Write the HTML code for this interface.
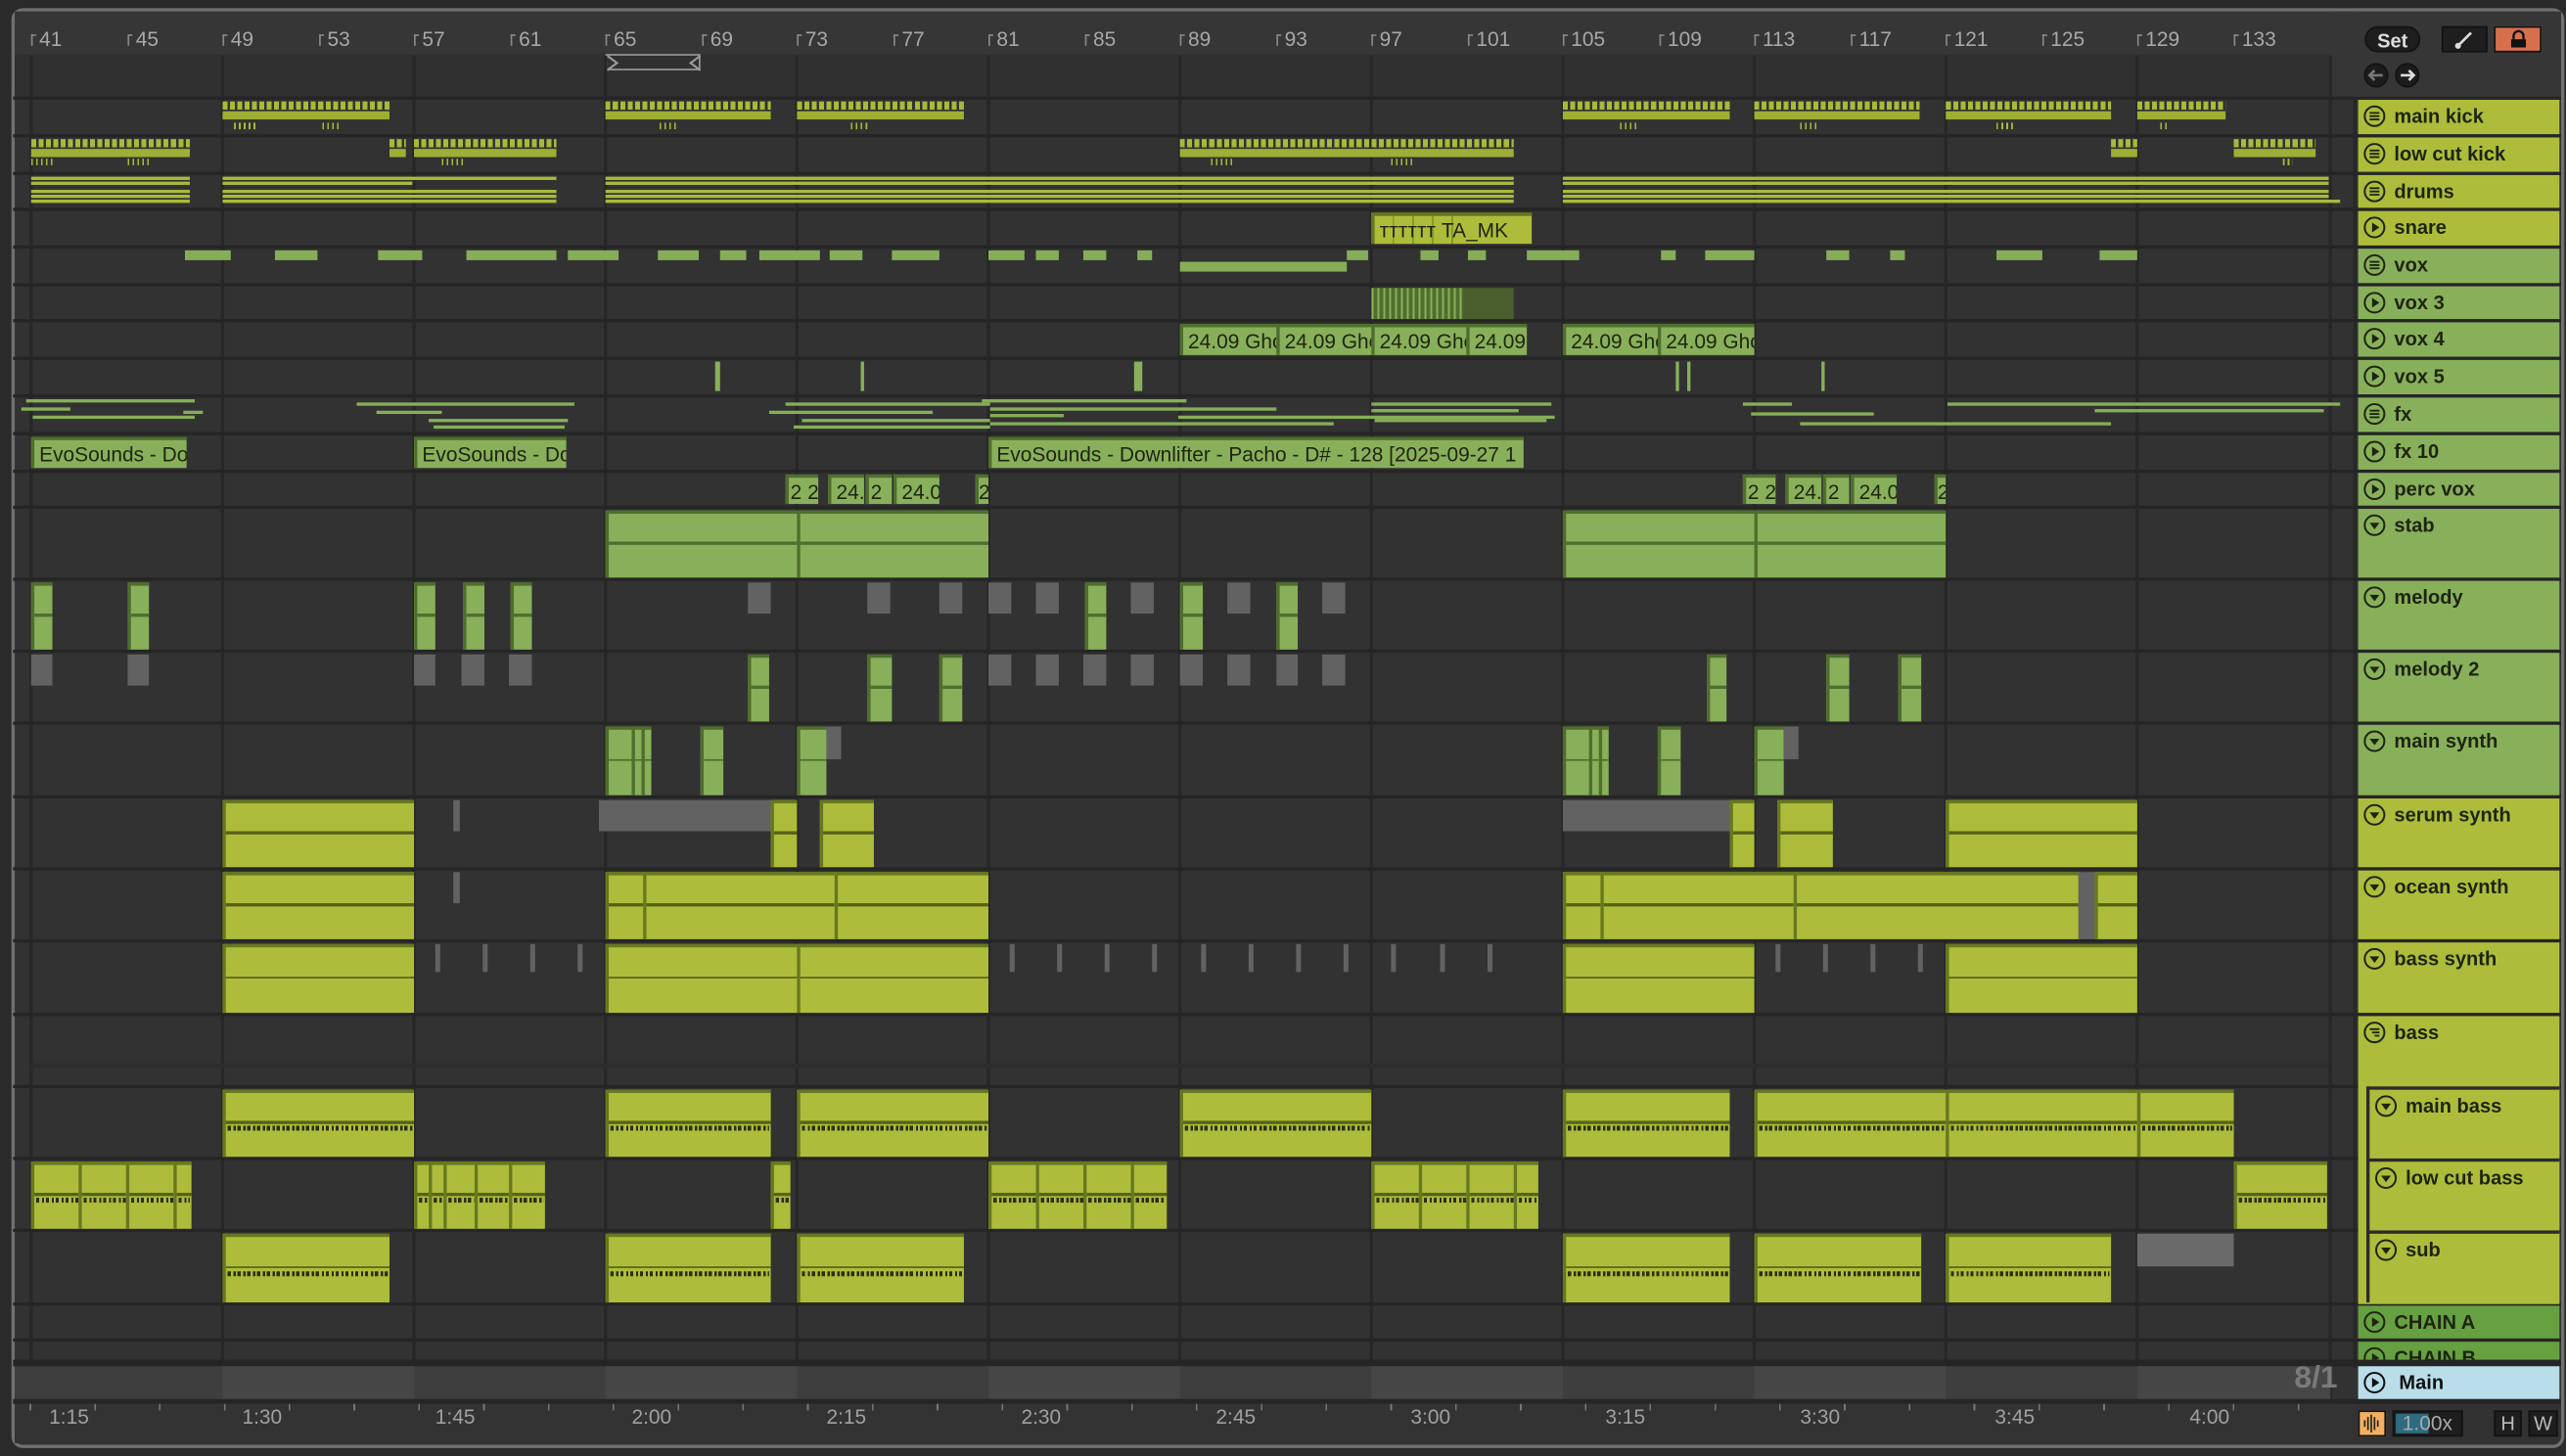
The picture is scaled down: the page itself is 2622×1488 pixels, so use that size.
<!DOCTYPE html>
<html><head><meta charset="utf-8">
<style>
html,body{margin:0;padding:0;background:#2a2a2a;width:2622px;height:1488px;overflow:hidden}
#s{position:absolute;left:0;top:0;width:1568px;height:890px;transform:scale(1.67219);transform-origin:0 0;font-family:"Liberation Sans",sans-serif}
.a{position:absolute}
.g,.y,.k{position:absolute;box-sizing:border-box}
.g{background:#88b05a;border-top:2px solid #4f6e2e;border-left:2px solid #4f6e2e}
.y{background:#adbd3b;border-top:2px solid #68781f;border-left:2px solid #68781f}
.k{background:#626262}
.L::before{content:"";position:absolute;left:0;right:0;top:44%;height:1.5px;background:rgba(50,60,10,.7)}
.g.L::before{background:#4f6e2e}
.B::after{content:"";position:absolute;left:1px;right:1px;top:52%;height:3px;background:repeating-linear-gradient(90deg,#2a2f10 0 2px,transparent 2px 3.6px,#2a2f10 3.6px 5px,transparent 5px 6px)}
.t{font-size:12.5px;color:#1f2410;line-height:18px;padding-left:3px;white-space:nowrap;overflow:hidden}
.sep{position:absolute;left:8px;width:1557px;height:2px;background:#252525}
.vl{position:absolute;top:34px;width:2px;height:822px;background:#272727}
.rn{position:absolute;top:17px;font-size:12.5px;color:#a8a8a8}
.rt{position:absolute;top:21px;width:1px;height:7px;border-left:1px solid #888;border-top:1px solid #888;box-sizing:border-box;width:3px}
.h{position:absolute;left:1441px;width:123px;box-sizing:border-box;font-size:12px;font-weight:bold;color:#1e2410;padding-left:22px;line-height:20px;white-space:nowrap;overflow:hidden}
.h svg{position:absolute;left:3px;top:3px}
.hy{background:#adbd3b}.hg{background:#88b05a}
.ks{position:absolute;height:5px;background:repeating-linear-gradient(90deg,#a9b93a 0 3px,transparent 3px 4.5px)}
.kb{position:absolute;height:5px;background:#9fae35}
.kt{position:absolute;height:4px;background:repeating-linear-gradient(90deg,#a9b93a 0 1px,transparent 1px 3px)}
.ln{position:absolute;height:1.5px;background:#a9b93a}
.fl{position:absolute;height:1.5px;background:#86ae58}
.vb{position:absolute;height:6px;background:#86ae58}
.gb{position:absolute;height:2px;background:#2b2b2b}
.bt{position:absolute;font-size:12.5px;color:#a0a0a0;top:859px}
</style></head><body><div id="s">
<!-- panel -->
<div class="a" style="left:7px;top:5px;width:1560px;height:880px;border:2px solid #707070;border-radius:7px;background:#323232;box-sizing:border-box"></div>
<div class="a" style="left:9px;top:7px;width:1430px;height:26px;background:#363636"></div>
<div class="a" style="left:9px;top:33px;width:1415px;height:27px;background:#303030"></div>
<div class="a" style="left:1424px;top:7px;width:141px;height:53px;background:#363636"></div>
<!-- ruler numbers -->
<div class="rt" style="left:19px"></div><div class="rn" style="left:24px">41</div>
<div class="rt" style="left:78px"></div><div class="rn" style="left:83px">45</div>
<div class="rt" style="left:136px"></div><div class="rn" style="left:141px">49</div>
<div class="rt" style="left:195px"></div><div class="rn" style="left:200px">53</div>
<div class="rt" style="left:253px"></div><div class="rn" style="left:258px">57</div>
<div class="rt" style="left:312px"></div><div class="rn" style="left:317px">61</div>
<div class="rt" style="left:370px"></div><div class="rn" style="left:375px">65</div>
<div class="rt" style="left:429px"></div><div class="rn" style="left:434px">69</div>
<div class="rt" style="left:487px"></div><div class="rn" style="left:492px">73</div>
<div class="rt" style="left:546px"></div><div class="rn" style="left:551px">77</div>
<div class="rt" style="left:604px"></div><div class="rn" style="left:609px">81</div>
<div class="rt" style="left:663px"></div><div class="rn" style="left:668px">85</div>
<div class="rt" style="left:721px"></div><div class="rn" style="left:726px">89</div>
<div class="rt" style="left:780px"></div><div class="rn" style="left:785px">93</div>
<div class="rt" style="left:838px"></div><div class="rn" style="left:843px">97</div>
<div class="rt" style="left:897px"></div><div class="rn" style="left:902px">101</div>
<div class="rt" style="left:955px"></div><div class="rn" style="left:960px">105</div>
<div class="rt" style="left:1014px"></div><div class="rn" style="left:1019px">109</div>
<div class="rt" style="left:1072px"></div><div class="rn" style="left:1077px">113</div>
<div class="rt" style="left:1131px"></div><div class="rn" style="left:1136px">117</div>
<div class="rt" style="left:1189px"></div><div class="rn" style="left:1194px">121</div>
<div class="rt" style="left:1248px"></div><div class="rn" style="left:1253px">125</div>
<div class="rt" style="left:1306px"></div><div class="rn" style="left:1311px">129</div>
<div class="rt" style="left:1365px"></div><div class="rn" style="left:1370px">133</div>
<!-- loop brace -->
<div class="a" style="left:370px;top:33px;width:58px;height:10px;border:1.5px solid #999;box-sizing:border-box"></div>
<svg class="a" style="left:370px;top:33px" width="60" height="11"><path d="M1 1 L7 5.5 L1 10 M58 1 L52 5.5 L58 10" fill="none" stroke="#999" stroke-width="1.3"/></svg>
<!-- vertical grid -->
<div class="vl" style="left:18px"></div><div class="vl" style="left:135px"></div><div class="vl" style="left:252px"></div><div class="vl" style="left:369px"></div><div class="vl" style="left:486px"></div><div class="vl" style="left:603px"></div><div class="vl" style="left:720px"></div><div class="vl" style="left:837px"></div><div class="vl" style="left:954px"></div><div class="vl" style="left:1071px"></div><div class="vl" style="left:1188px"></div><div class="vl" style="left:1305px"></div><div class="vl" style="left:1423px"></div>
<div class="a" style="left:1438px;top:60px;width:2px;height:776px;background:#272727"></div>
<!-- separators -->
<div class="sep" style="top:59px"></div><div class="sep" style="top:82px"></div><div class="sep" style="top:105px"></div><div class="sep" style="top:127px"></div><div class="sep" style="top:150px"></div><div class="sep" style="top:173px"></div><div class="sep" style="top:195px"></div><div class="sep" style="top:218px"></div><div class="sep" style="top:241px"></div><div class="sep" style="top:264px"></div><div class="sep" style="top:287px"></div><div class="sep" style="top:309px"></div><div class="sep" style="top:353px"></div><div class="sep" style="top:397px"></div><div class="sep" style="top:441px"></div><div class="sep" style="top:486px"></div><div class="sep" style="top:530px"></div><div class="sep" style="top:574px"></div><div class="sep" style="top:619px"></div><div class="sep" style="top:663px"></div><div class="sep" style="top:707px"></div><div class="sep" style="top:751px"></div><div class="sep" style="top:796px"></div><div class="sep" style="top:818px"></div>
<div class="a" style="left:8px;top:831px;width:1557px;height:4px;background:#252525"></div>

<!-- main kick -->
<div class="ks" style="left:136px;top:62px;width:102px"></div><div class="kb" style="left:136px;top:68px;width:102px"></div><div class="kt" style="left:143px;top:75px;width:14px"></div><div class="kt" style="left:197px;top:75px;width:10px"></div>
<div class="ks" style="left:370px;top:62px;width:101px"></div><div class="kb" style="left:370px;top:68px;width:101px"></div><div class="kt" style="left:403px;top:75px;width:10px"></div>
<div class="ks" style="left:487px;top:62px;width:102px"></div><div class="kb" style="left:487px;top:68px;width:102px"></div><div class="kt" style="left:520px;top:75px;width:10px"></div>
<div class="ks" style="left:955px;top:62px;width:102px"></div><div class="kb" style="left:955px;top:68px;width:102px"></div><div class="kt" style="left:990px;top:75px;width:10px"></div>
<div class="ks" style="left:1072px;top:62px;width:101px"></div><div class="kb" style="left:1072px;top:68px;width:101px"></div><div class="kt" style="left:1100px;top:75px;width:10px"></div>
<div class="ks" style="left:1189px;top:62px;width:101px"></div><div class="kb" style="left:1189px;top:68px;width:101px"></div><div class="kt" style="left:1220px;top:75px;width:10px"></div>
<div class="ks" style="left:1306px;top:62px;width:54px"></div><div class="kb" style="left:1306px;top:68px;width:54px"></div><div class="kt" style="left:1320px;top:75px;width:6px"></div>
<!-- low cut kick -->
<div class="ks" style="left:19px;top:85px;width:97px"></div><div class="kb" style="left:19px;top:91px;width:97px"></div><div class="kt" style="left:19px;top:97px;width:14px"></div><div class="kt" style="left:78px;top:97px;width:14px"></div>
<div class="ks" style="left:238px;top:85px;width:10px"></div><div class="kb" style="left:238px;top:91px;width:10px"></div>
<div class="ks" style="left:253px;top:85px;width:87px"></div><div class="kb" style="left:253px;top:91px;width:87px"></div><div class="kt" style="left:270px;top:97px;width:14px"></div>
<div class="ks" style="left:721px;top:85px;width:204px"></div><div class="kb" style="left:721px;top:91px;width:204px"></div><div class="kt" style="left:740px;top:97px;width:14px"></div><div class="kt" style="left:850px;top:97px;width:14px"></div>
<div class="ks" style="left:1290px;top:85px;width:16px"></div><div class="kb" style="left:1290px;top:91px;width:16px"></div>
<div class="ks" style="left:1365px;top:85px;width:50px"></div><div class="kb" style="left:1365px;top:91px;width:50px"></div><div class="kt" style="left:1395px;top:97px;width:6px"></div>
<!-- drums -->
<div class="ln" style="left:19px;top:108px;width:97px"></div><div class="ln" style="left:19px;top:111px;width:97px"></div><div class="ln" style="left:19px;top:116px;width:97px"></div><div class="ln" style="left:19px;top:119px;width:97px"></div><div class="ln" style="left:19px;top:122px;width:97px"></div>
<div class="ln" style="left:136px;top:108px;width:204px"></div><div class="ln" style="left:136px;top:111px;width:116px"></div><div class="ln" style="left:136px;top:116px;width:204px"></div><div class="ln" style="left:136px;top:119px;width:204px"></div><div class="ln" style="left:136px;top:122px;width:204px"></div>
<div class="ln" style="left:370px;top:108px;width:555px"></div><div class="ln" style="left:370px;top:111px;width:555px"></div><div class="ln" style="left:370px;top:116px;width:555px"></div><div class="ln" style="left:370px;top:119px;width:555px"></div><div class="ln" style="left:370px;top:122px;width:555px"></div>
<div class="ln" style="left:955px;top:108px;width:468px"></div><div class="ln" style="left:955px;top:111px;width:468px"></div><div class="ln" style="left:955px;top:116px;width:468px"></div><div class="ln" style="left:955px;top:119px;width:468px"></div><div class="ln" style="left:955px;top:122px;width:475px"></div>
<!-- snare -->
<div class="y t" style="left:838px;top:130px;width:98px;height:19px;background:repeating-linear-gradient(90deg,#adbd3b 0 11px,#889a28 11px 12px) 0 0/54px 100% no-repeat,#adbd3b">ᴛᴛᴛᴛᴛᴛ&nbsp;TA_MK</div>
<!-- vox -->
<div class="vb" style="left:113px;top:153px;width:28px"></div><div class="vb" style="left:168px;top:153px;width:26px"></div><div class="vb" style="left:231px;top:153px;width:27px"></div><div class="vb" style="left:285px;top:153px;width:55px"></div><div class="vb" style="left:347px;top:153px;width:31px"></div><div class="vb" style="left:402px;top:153px;width:25px"></div><div class="vb" style="left:440px;top:153px;width:16px"></div><div class="vb" style="left:464px;top:153px;width:37px"></div><div class="vb" style="left:507px;top:153px;width:20px"></div><div class="vb" style="left:545px;top:153px;width:29px"></div><div class="vb" style="left:604px;top:153px;width:22px"></div><div class="vb" style="left:633px;top:153px;width:14px"></div><div class="vb" style="left:662px;top:153px;width:14px"></div><div class="vb" style="left:695px;top:153px;width:9px"></div><div class="vb" style="left:823px;top:153px;width:13px"></div><div class="vb" style="left:868px;top:153px;width:11px"></div><div class="vb" style="left:897px;top:153px;width:11px"></div><div class="vb" style="left:933px;top:153px;width:32px"></div><div class="vb" style="left:1015px;top:153px;width:9px"></div><div class="vb" style="left:1042px;top:153px;width:30px"></div><div class="vb" style="left:1116px;top:153px;width:14px"></div><div class="vb" style="left:1155px;top:153px;width:9px"></div><div class="vb" style="left:1220px;top:153px;width:28px"></div><div class="vb" style="left:1283px;top:153px;width:23px"></div>
<div class="vb" style="left:721px;top:160px;width:102px"></div>
<!-- vox 3 -->
<div class="a" style="left:838px;top:176px;width:87px;height:19px;background:#4a5e2e"></div>
<div class="a" style="left:838px;top:176px;width:56px;height:19px;background:repeating-linear-gradient(90deg,#88b05a 0 1.2px,#4f6e2e 1.2px 3.6px)"></div>
<!-- vox 4 -->
<div class="g t" style="left:721px;top:198px;width:59px;height:19px">24.09 Ghost</div>
<div class="g t" style="left:780px;top:198px;width:59px;height:19px">24.09 Ghost</div>
<div class="g t" style="left:838px;top:198px;width:59px;height:19px">24.09 Ghost</div>
<div class="g t" style="left:896px;top:198px;width:37px;height:19px">24.09</div>
<div class="g t" style="left:955px;top:198px;width:59px;height:19px">24.09 Ghost</div>
<div class="g t" style="left:1013px;top:198px;width:59px;height:19px">24.09 Ghost</div>
<!-- vox 5 -->
<div class="a" style="left:437px;top:221px;width:3px;height:18px;background:#88b05a"></div><div class="a" style="left:526px;top:221px;width:2px;height:18px;background:#88b05a"></div><div class="a" style="left:693px;top:221px;width:5px;height:18px;background:#88b05a"></div><div class="a" style="left:1024px;top:221px;width:2px;height:18px;background:#88b05a"></div><div class="a" style="left:1031px;top:221px;width:2px;height:18px;background:#88b05a"></div><div class="a" style="left:1113px;top:221px;width:2px;height:18px;background:#88b05a"></div>
<!-- fx -->
<div class="fl" style="left:16px;top:244px;width:103px"></div><div class="fl" style="left:13px;top:249px;width:30px"></div><div class="fl" style="left:20px;top:254px;width:99px"></div><div class="fl" style="left:112px;top:251px;width:12px"></div>
<div class="fl" style="left:218px;top:246px;width:133px"></div><div class="fl" style="left:230px;top:251px;width:40px"></div><div class="fl" style="left:262px;top:256px;width:85px"></div><div class="fl" style="left:265px;top:260px;width:80px"></div>
<div class="fl" style="left:480px;top:246px;width:125px"></div><div class="fl" style="left:470px;top:251px;width:100px"></div><div class="fl" style="left:490px;top:256px;width:115px"></div><div class="fl" style="left:485px;top:260px;width:120px"></div>
<div class="fl" style="left:600px;top:244px;width:125px"></div><div class="fl" style="left:605px;top:249px;width:175px"></div><div class="fl" style="left:605px;top:253px;width:45px"></div><div class="fl" style="left:605px;top:258px;width:210px"></div><div class="fl" style="left:720px;top:254px;width:230px"></div>
<div class="fl" style="left:838px;top:246px;width:110px"></div><div class="fl" style="left:838px;top:250px;width:90px"></div><div class="fl" style="left:840px;top:256px;width:105px"></div>
<div class="fl" style="left:1065px;top:246px;width:30px"></div><div class="fl" style="left:1070px;top:252px;width:75px"></div><div class="fl" style="left:1100px;top:258px;width:190px"></div><div class="fl" style="left:1190px;top:246px;width:240px"></div><div class="fl" style="left:1280px;top:250px;width:140px"></div>
<!-- fx 10 -->
<div class="g t" style="left:19px;top:267px;width:95px;height:19px">EvoSounds - Downlifter</div>
<div class="g t" style="left:253px;top:267px;width:93px;height:19px">EvoSounds - Downlifter</div>
<div class="g t" style="left:604px;top:267px;width:327px;height:19px">EvoSounds - Downlifter - Pacho - D# - 128 [2025-09-27 1</div>
<!-- perc vox -->
<div class="g t" style="left:480px;top:290px;width:20px;height:18px;padding-left:1px">2 2</div><div class="g t" style="left:506px;top:290px;width:22px;height:18px">24.</div><div class="g t" style="left:529px;top:290px;width:16px;height:18px;padding-left:1px">2</div><div class="g t" style="left:546px;top:290px;width:28px;height:18px">24.0</div><div class="g t" style="left:596px;top:290px;width:8px;height:18px;padding-left:0">2</div>
<div class="g t" style="left:1065px;top:290px;width:20px;height:18px;padding-left:1px">2 2</div><div class="g t" style="left:1091px;top:290px;width:22px;height:18px">24.</div><div class="g t" style="left:1114px;top:290px;width:16px;height:18px;padding-left:1px">2</div><div class="g t" style="left:1131px;top:290px;width:28px;height:18px">24.0</div><div class="g t" style="left:1182px;top:290px;width:7px;height:18px;padding-left:0">2</div>
<!-- stab -->
<div class="g L" style="left:370px;top:312px;width:118px;height:41px"></div><div class="g L" style="left:487px;top:312px;width:117px;height:41px"></div>
<div class="g L" style="left:955px;top:312px;width:118px;height:41px"></div><div class="g L" style="left:1072px;top:312px;width:117px;height:41px"></div>
<!-- melody -->
<div class="g L" style="left:19px;top:356px;width:13px;height:41px"></div><div class="g L" style="left:78px;top:356px;width:13px;height:41px"></div><div class="g L" style="left:253px;top:356px;width:13px;height:41px"></div><div class="g L" style="left:283px;top:356px;width:13px;height:41px"></div><div class="g L" style="left:312px;top:356px;width:13px;height:41px"></div><div class="g L" style="left:663px;top:356px;width:13px;height:41px"></div><div class="g L" style="left:721px;top:356px;width:14px;height:41px"></div><div class="g L" style="left:780px;top:356px;width:13px;height:41px"></div>
<div class="k" style="left:457px;top:356px;width:14px;height:19px"></div><div class="k" style="left:530px;top:356px;width:14px;height:19px"></div><div class="k" style="left:574px;top:356px;width:14px;height:19px"></div><div class="k" style="left:604px;top:356px;width:14px;height:19px"></div><div class="k" style="left:633px;top:356px;width:14px;height:19px"></div><div class="k" style="left:691px;top:356px;width:14px;height:19px"></div><div class="k" style="left:750px;top:356px;width:14px;height:19px"></div><div class="k" style="left:808px;top:356px;width:14px;height:19px"></div>
<!-- melody 2 -->
<div class="k" style="left:19px;top:400px;width:13px;height:19px"></div><div class="k" style="left:78px;top:400px;width:13px;height:19px"></div><div class="k" style="left:253px;top:400px;width:13px;height:19px"></div><div class="k" style="left:282px;top:400px;width:14px;height:19px"></div><div class="k" style="left:311px;top:400px;width:14px;height:19px"></div><div class="k" style="left:604px;top:400px;width:14px;height:19px"></div><div class="k" style="left:633px;top:400px;width:14px;height:19px"></div><div class="k" style="left:662px;top:400px;width:14px;height:19px"></div><div class="k" style="left:691px;top:400px;width:14px;height:19px"></div><div class="k" style="left:721px;top:400px;width:14px;height:19px"></div><div class="k" style="left:750px;top:400px;width:14px;height:19px"></div><div class="k" style="left:780px;top:400px;width:13px;height:19px"></div><div class="k" style="left:808px;top:400px;width:14px;height:19px"></div>
<div class="g L" style="left:457px;top:400px;width:13px;height:41px"></div><div class="g L" style="left:530px;top:400px;width:15px;height:41px"></div><div class="g L" style="left:574px;top:400px;width:14px;height:41px"></div><div class="g L" style="left:1043px;top:400px;width:12px;height:41px"></div><div class="g L" style="left:1116px;top:400px;width:14px;height:41px"></div><div class="g L" style="left:1160px;top:400px;width:14px;height:41px"></div>
<!-- main synth -->
<div class="g L" style="left:370px;top:444px;width:17px;height:42px"></div><div class="g L" style="left:386px;top:444px;width:7px;height:42px"></div><div class="g L" style="left:392px;top:444px;width:6px;height:42px"></div><div class="g L" style="left:428px;top:444px;width:14px;height:42px"></div><div class="g L" style="left:487px;top:444px;width:18px;height:42px"></div><div class="k" style="left:505px;top:444px;width:9px;height:20px"></div>
<div class="g L" style="left:955px;top:444px;width:17px;height:42px"></div><div class="g L" style="left:971px;top:444px;width:7px;height:42px"></div><div class="g L" style="left:977px;top:444px;width:6px;height:42px"></div><div class="g L" style="left:1013px;top:444px;width:14px;height:42px"></div><div class="g L" style="left:1072px;top:444px;width:18px;height:42px"></div><div class="k" style="left:1090px;top:444px;width:9px;height:20px"></div>
<!-- serum -->
<div class="y L" style="left:136px;top:489px;width:117px;height:41px"></div>
<div class="k" style="left:277px;top:489px;width:4px;height:19px"></div>
<div class="k" style="left:366px;top:489px;width:105px;height:19px"></div>
<div class="y L" style="left:471px;top:489px;width:16px;height:41px"></div>
<div class="y L" style="left:501px;top:489px;width:33px;height:41px"></div>
<div class="k" style="left:955px;top:489px;width:102px;height:19px"></div>
<div class="y L" style="left:1057px;top:489px;width:15px;height:41px"></div>
<div class="y L" style="left:1086px;top:489px;width:34px;height:41px"></div>
<div class="y L" style="left:1189px;top:489px;width:117px;height:41px"></div>
<!-- ocean -->
<div class="y L" style="left:136px;top:533px;width:117px;height:41px"></div>
<div class="k" style="left:277px;top:533px;width:4px;height:19px"></div>
<div class="y L" style="left:370px;top:533px;width:25px;height:41px"></div><div class="y L" style="left:393px;top:533px;width:118px;height:41px"></div><div class="y L" style="left:510px;top:533px;width:94px;height:41px"></div>
<div class="y L" style="left:955px;top:533px;width:25px;height:41px"></div><div class="y L" style="left:978px;top:533px;width:120px;height:41px"></div><div class="y L" style="left:1096px;top:533px;width:175px;height:41px"></div><div class="k" style="left:1270px;top:533px;width:10px;height:41px"></div><div class="y L" style="left:1280px;top:533px;width:26px;height:41px"></div>
<!-- bass synth -->
<div class="y L" style="left:136px;top:577px;width:117px;height:42px"></div>
<div class="y L" style="left:370px;top:577px;width:118px;height:42px"></div><div class="y L" style="left:487px;top:577px;width:117px;height:42px"></div>
<div class="y L" style="left:955px;top:577px;width:117px;height:42px"></div>
<div class="y L" style="left:1189px;top:577px;width:117px;height:42px"></div>
<div class="k" style="left:266px;top:577px;width:3px;height:17px"></div><div class="k" style="left:295px;top:577px;width:3px;height:17px"></div><div class="k" style="left:324px;top:577px;width:3px;height:17px"></div><div class="k" style="left:353px;top:577px;width:3px;height:17px"></div>
<div class="k" style="left:617px;top:577px;width:3px;height:17px"></div><div class="k" style="left:646px;top:577px;width:3px;height:17px"></div><div class="k" style="left:675px;top:577px;width:3px;height:17px"></div><div class="k" style="left:704px;top:577px;width:3px;height:17px"></div><div class="k" style="left:734px;top:577px;width:3px;height:17px"></div><div class="k" style="left:763px;top:577px;width:3px;height:17px"></div><div class="k" style="left:792px;top:577px;width:3px;height:17px"></div><div class="k" style="left:821px;top:577px;width:3px;height:17px"></div><div class="k" style="left:850px;top:577px;width:3px;height:17px"></div><div class="k" style="left:880px;top:577px;width:3px;height:17px"></div><div class="k" style="left:909px;top:577px;width:3px;height:17px"></div>
<div class="k" style="left:1085px;top:577px;width:3px;height:17px"></div><div class="k" style="left:1114px;top:577px;width:3px;height:17px"></div><div class="k" style="left:1143px;top:577px;width:3px;height:17px"></div><div class="k" style="left:1172px;top:577px;width:3px;height:17px"></div>
<!-- bass -->
<div class="gb" style="left:19px;top:650px;width:1404px;height:3px;background:#2c2c2c"></div>
<!-- main bass -->
<div class="y L B" style="left:136px;top:666px;width:117px;height:41px"></div>
<div class="y L B" style="left:370px;top:666px;width:101px;height:41px"></div><div class="y L B" style="left:487px;top:666px;width:117px;height:41px"></div>
<div class="y L B" style="left:721px;top:666px;width:117px;height:41px"></div>
<div class="y L B" style="left:955px;top:666px;width:102px;height:41px"></div>
<div class="y L B" style="left:1072px;top:666px;width:117px;height:41px"></div><div class="y L B" style="left:1189px;top:666px;width:117px;height:41px"></div><div class="y L B" style="left:1306px;top:666px;width:59px;height:41px"></div>
<!-- low cut bass -->
<div class="y L B" style="left:19px;top:710px;width:30px;height:41px"></div><div class="y L B" style="left:48px;top:710px;width:30px;height:41px"></div><div class="y L B" style="left:77px;top:710px;width:30px;height:41px"></div><div class="y L B" style="left:106px;top:710px;width:11px;height:41px"></div>
<div class="y L B" style="left:253px;top:710px;width:10px;height:41px"></div><div class="y L B" style="left:262px;top:710px;width:10px;height:41px"></div><div class="y L B" style="left:271px;top:710px;width:20px;height:41px"></div><div class="y L B" style="left:290px;top:710px;width:22px;height:41px"></div><div class="y L B" style="left:311px;top:710px;width:22px;height:41px"></div>
<div class="y L B" style="left:471px;top:710px;width:12px;height:41px"></div>
<div class="y L B" style="left:604px;top:710px;width:30px;height:41px"></div><div class="y L B" style="left:633px;top:710px;width:30px;height:41px"></div><div class="y L B" style="left:662px;top:710px;width:30px;height:41px"></div><div class="y L B" style="left:691px;top:710px;width:22px;height:41px"></div>
<div class="y L B" style="left:838px;top:710px;width:30px;height:41px"></div><div class="y L B" style="left:867px;top:710px;width:30px;height:41px"></div><div class="y L B" style="left:896px;top:710px;width:30px;height:41px"></div><div class="y L B" style="left:925px;top:710px;width:15px;height:41px"></div>
<div class="y L B" style="left:1365px;top:710px;width:57px;height:41px"></div>
<!-- sub -->
<div class="y L B" style="left:136px;top:754px;width:102px;height:42px"></div>
<div class="y L B" style="left:370px;top:754px;width:101px;height:42px"></div><div class="y L B" style="left:487px;top:754px;width:102px;height:42px"></div>
<div class="y L B" style="left:955px;top:754px;width:102px;height:42px"></div><div class="y L B" style="left:1072px;top:754px;width:102px;height:42px"></div><div class="y L B" style="left:1189px;top:754px;width:101px;height:42px"></div>
<div class="k" style="left:1306px;top:754px;width:59px;height:20px;background:#6a6a6a"></div>

<!-- main band -->
<div class="a" style="left:9px;top:835px;width:1415px;height:21px;background:#3e3e3e"></div>
<div class="a" style="left:136px;top:835px;width:117px;height:21px;background:#464646"></div><div class="a" style="left:370px;top:835px;width:117px;height:21px;background:#464646"></div><div class="a" style="left:604px;top:835px;width:117px;height:21px;background:#464646"></div><div class="a" style="left:838px;top:835px;width:117px;height:21px;background:#464646"></div><div class="a" style="left:1072px;top:835px;width:117px;height:21px;background:#464646"></div><div class="a" style="left:1306px;top:835px;width:118px;height:21px;background:#464646"></div>
<div class="a" style="left:1402px;top:832px;font-size:19px;font-weight:bold;color:#7a7a7a">8/1</div>
<div class="a" style="left:8px;top:855px;width:1557px;height:3px;background:#252525"></div>
<!-- bottom ruler -->
<div class="a" style="left:9px;top:858px;width:1430px;height:24px;background:#333"></div>
<div class="bt" style="left:30px">1:15</div><div class="bt" style="left:148px">1:30</div><div class="bt" style="left:266px">1:45</div><div class="bt" style="left:386px">2:00</div><div class="bt" style="left:505px">2:15</div><div class="bt" style="left:624px">2:30</div><div class="bt" style="left:743px">2:45</div><div class="bt" style="left:862px">3:00</div><div class="bt" style="left:981px">3:15</div><div class="bt" style="left:1100px">3:30</div><div class="bt" style="left:1219px">3:45</div><div class="bt" style="left:1338px">4:00</div>
<div class="a" style="left:18px;top:858px;width:1410px;height:4px;background:repeating-linear-gradient(90deg,#777 0 1px,transparent 1px 39.6px)"></div>

<!-- top right controls -->
<div class="a" style="left:1445px;top:16px;width:34px;height:16px;border-radius:8px;background:#1e1e1e;border:1px solid #111;color:#ddd;font-size:12px;font-weight:bold;text-align:center;line-height:16px;box-sizing:border-box">Set</div>
<div class="a" style="left:1492px;top:16px;width:28px;height:16px;background:#1e1e1e;border:1px solid #111;box-sizing:border-box"><svg width="26" height="14"><path d="M9 11 L17 3" stroke="#ddd" stroke-width="1.6"/><circle cx="9" cy="11" r="1.8" fill="#ddd"/></svg></div>
<div class="a" style="left:1524px;top:16px;width:29px;height:16px;background:#d5704d;border:1px solid #111;box-sizing:border-box"><svg width="27" height="14"><path d="M11 7 V5 a3 3 0 0 1 6 0 V7" fill="none" stroke="#111" stroke-width="1.4"/><rect x="9.5" y="7" width="9" height="5" fill="#111"/></svg></div>
<svg class="a" style="left:1444px;top:38px" width="40" height="16"><circle cx="8" cy="8" r="7" fill="#1c1c1c" stroke="#111"/><circle cx="27" cy="8" r="7" fill="#1c1c1c" stroke="#111"/><path d="M12 8 H4 M7 5 L4 8 L7 11" stroke="#777" stroke-width="1.6" fill="none"/><path d="M23 8 H31 M28 5 L31 8 L28 11" stroke="#ddd" stroke-width="1.6" fill="none"/></svg>

<!-- track headers -->
<div class="h hy" style="top:61px;height:21px">main kick<svg width="16" height="16"><circle cx="7" cy="7" r="6" fill="none" stroke="#1e2410" stroke-width="1.2"/><path d="M4 5H10M4 7H10M4 9H10" stroke="#1e2410" stroke-width="1.1"/></svg></div>
<div class="h hy" style="top:84px;height:21px">low cut kick<svg width="16" height="16"><circle cx="7" cy="7" r="6" fill="none" stroke="#1e2410" stroke-width="1.2"/><path d="M4 5H10M4 7H10M4 9H10" stroke="#1e2410" stroke-width="1.1"/></svg></div>
<div class="h hy" style="top:107px;height:20px">drums<svg width="16" height="16"><circle cx="7" cy="7" r="6" fill="none" stroke="#1e2410" stroke-width="1.2"/><path d="M4 5H10M4 7H10M4 9H10" stroke="#1e2410" stroke-width="1.1"/></svg></div>
<div class="h hy" style="top:129px;height:21px">snare<svg width="16" height="16"><circle cx="7" cy="7" r="6" fill="none" stroke="#1e2410" stroke-width="1.2"/><path d="M5.5 4L10 7L5.5 10Z" fill="#1e2410"/></svg></div>
<div class="h hg" style="top:152px;height:21px">vox<svg width="16" height="16"><circle cx="7" cy="7" r="6" fill="none" stroke="#1e2410" stroke-width="1.2"/><path d="M4 5H10M4 7H10M4 9H10" stroke="#1e2410" stroke-width="1.1"/></svg></div>
<div class="h hg" style="top:175px;height:20px">vox 3<svg width="16" height="16"><circle cx="7" cy="7" r="6" fill="none" stroke="#1e2410" stroke-width="1.2"/><path d="M5.5 4L10 7L5.5 10Z" fill="#1e2410"/></svg></div>
<div class="h hg" style="top:197px;height:21px">vox 4<svg width="16" height="16"><circle cx="7" cy="7" r="6" fill="none" stroke="#1e2410" stroke-width="1.2"/><path d="M5.5 4L10 7L5.5 10Z" fill="#1e2410"/></svg></div>
<div class="h hg" style="top:220px;height:21px">vox 5<svg width="16" height="16"><circle cx="7" cy="7" r="6" fill="none" stroke="#1e2410" stroke-width="1.2"/><path d="M5.5 4L10 7L5.5 10Z" fill="#1e2410"/></svg></div>
<div class="h hg" style="top:243px;height:21px">fx<svg width="16" height="16"><circle cx="7" cy="7" r="6" fill="none" stroke="#1e2410" stroke-width="1.2"/><path d="M4 5H10M4 7H10M4 9H10" stroke="#1e2410" stroke-width="1.1"/></svg></div>
<div class="h hg" style="top:266px;height:21px">fx 10<svg width="16" height="16"><circle cx="7" cy="7" r="6" fill="none" stroke="#1e2410" stroke-width="1.2"/><path d="M5.5 4L10 7L5.5 10Z" fill="#1e2410"/></svg></div>
<div class="h hg" style="top:289px;height:20px">perc vox<svg width="16" height="16"><circle cx="7" cy="7" r="6" fill="none" stroke="#1e2410" stroke-width="1.2"/><path d="M5.5 4L10 7L5.5 10Z" fill="#1e2410"/></svg></div>
<div class="h hg" style="top:311px;height:42px">stab<svg width="16" height="16"><circle cx="7" cy="7" r="6" fill="none" stroke="#1e2410" stroke-width="1.2"/><path d="M4 5.5H10L7 9.5Z" fill="#1e2410"/></svg></div>
<div class="h hg" style="top:355px;height:42px">melody<svg width="16" height="16"><circle cx="7" cy="7" r="6" fill="none" stroke="#1e2410" stroke-width="1.2"/><path d="M4 5.5H10L7 9.5Z" fill="#1e2410"/></svg></div>
<div class="h hg" style="top:399px;height:42px">melody 2<svg width="16" height="16"><circle cx="7" cy="7" r="6" fill="none" stroke="#1e2410" stroke-width="1.2"/><path d="M4 5.5H10L7 9.5Z" fill="#1e2410"/></svg></div>
<div class="h hg" style="top:443px;height:43px">main synth<svg width="16" height="16"><circle cx="7" cy="7" r="6" fill="none" stroke="#1e2410" stroke-width="1.2"/><path d="M4 5.5H10L7 9.5Z" fill="#1e2410"/></svg></div>
<div class="h hy" style="top:488px;height:42px">serum synth<svg width="16" height="16"><circle cx="7" cy="7" r="6" fill="none" stroke="#1e2410" stroke-width="1.2"/><path d="M4 5.5H10L7 9.5Z" fill="#1e2410"/></svg></div>
<div class="h hy" style="top:532px;height:42px">ocean synth<svg width="16" height="16"><circle cx="7" cy="7" r="6" fill="none" stroke="#1e2410" stroke-width="1.2"/><path d="M4 5.5H10L7 9.5Z" fill="#1e2410"/></svg></div>
<div class="h hy" style="top:576px;height:43px">bass synth<svg width="16" height="16"><circle cx="7" cy="7" r="6" fill="none" stroke="#1e2410" stroke-width="1.2"/><path d="M4 5.5H10L7 9.5Z" fill="#1e2410"/></svg></div>
<div class="h hy" style="top:621px;height:176px">bass<svg width="16" height="16"><circle cx="7" cy="7" r="6" fill="none" stroke="#1e2410" stroke-width="1.2"/><path d="M4 5H10M5.5 7H10M7 9H10" stroke="#1e2410" stroke-width="1.1"/></svg></div>
<div class="h hy" style="left:1446px;width:118px;top:664px;height:44px;border-left:2px solid #2a2a2a;border-top:2px solid #2a2a2a;padding-left:22px">main bass<svg width="16" height="16"><circle cx="7" cy="7" r="6" fill="none" stroke="#1e2410" stroke-width="1.2"/><path d="M4 5.5H10L7 9.5Z" fill="#1e2410"/></svg></div>
<div class="h hy" style="left:1446px;width:118px;top:708px;height:44px;border-left:2px solid #2a2a2a;border-top:2px solid #2a2a2a;padding-left:22px">low cut bass<svg width="16" height="16"><circle cx="7" cy="7" r="6" fill="none" stroke="#1e2410" stroke-width="1.2"/><path d="M4 5.5H10L7 9.5Z" fill="#1e2410"/></svg></div>
<div class="h hy" style="left:1446px;width:118px;top:752px;height:44px;border-left:2px solid #2a2a2a;border-top:2px solid #2a2a2a;padding-left:22px">sub<svg width="16" height="16"><circle cx="7" cy="7" r="6" fill="none" stroke="#1e2410" stroke-width="1.2"/><path d="M4 5.5H10L7 9.5Z" fill="#1e2410"/></svg></div>
<div class="h" style="top:798px;height:20px;background:#66a041">CHAIN A<svg width="16" height="16"><circle cx="7" cy="7" r="6" fill="none" stroke="#1e2410" stroke-width="1.2"/><path d="M5.5 4L10 7L5.5 10Z" fill="#1e2410"/></svg></div>
<div class="h" style="top:820px;height:11px;background:#66a041;line-height:20px">CHAIN B<svg width="16" height="16"><circle cx="7" cy="7" r="6" fill="none" stroke="#1e2410" stroke-width="1.2"/><path d="M5.5 4L10 7L5.5 10Z" fill="#1e2410"/></svg></div>
<div class="h" style="top:835px;height:20px;background:#b9deea;color:#111;padding-left:25px">Main<svg width="16" height="16"><circle cx="7" cy="7" r="6" fill="none" stroke="#111" stroke-width="1.2"/><path d="M5.5 4L10 7L5.5 10Z" fill="#111"/></svg></div>
<!-- bottom right -->
<div class="a" style="left:1441px;top:862px;width:17px;height:16px;background:#f3b060;border:1px solid #111;box-sizing:border-box"><svg width="15" height="14"><path d="M3 5V9M5 3V11M7 1.5V12.5M9 3V11M11 5V9" stroke="#222" stroke-width="1"/></svg></div>
<div class="a" style="left:1462px;top:862px;width:43px;height:16px;background:#1e1e1e;border:1px solid #111;box-sizing:border-box"><div class="a" style="left:1px;top:1px;width:20px;height:12px;background:#2e6b80"></div><div class="a" style="left:5px;top:0;font-size:12.5px;color:#aaa;line-height:14px">1.00x</div></div>
<div class="a" style="left:1524px;top:862px;width:17px;height:16px;background:#1e1e1e;border:1px solid #111;box-sizing:border-box;color:#bbb;font-size:12px;text-align:center;line-height:14px">H</div>
<div class="a" style="left:1545px;top:862px;width:18px;height:16px;background:#1e1e1e;border:1px solid #111;box-sizing:border-box;color:#bbb;font-size:12px;text-align:center;line-height:14px">W</div>
</div></body></html>
